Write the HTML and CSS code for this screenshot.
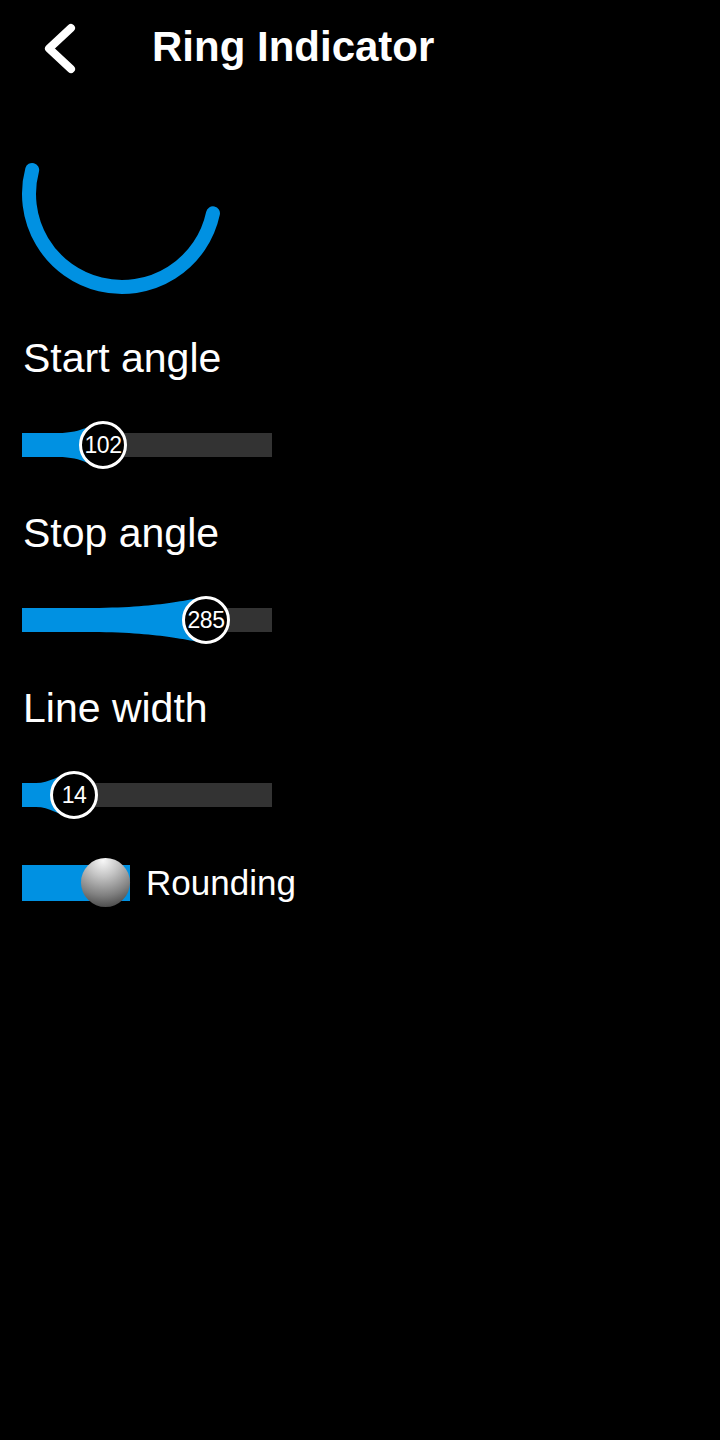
FILE: index.html
```html
<!DOCTYPE html>
<html>
<head>
<meta charset="utf-8">
<link rel="stylesheet" href="styles.css">
</head>
<body>
<div class="screen">
  <header class="header">
    <svg class="back" width="40" height="60" viewBox="0 0 40 60">
      <polyline points="27,9 5,29.5 27,50" fill="none" stroke="#fff" stroke-width="8" stroke-linecap="round" stroke-linejoin="round"/>
    </svg>
    <h1 class="title">Ring Indicator</h1>
  </header>

  <svg class="ring" width="200" height="200" viewBox="0 0 200 200">
    <path d="M 10.17 75.93 A 93 93 0 1 0 190.97 119.34" fill="none" stroke="#0091e2" stroke-width="14" stroke-linecap="round"/>
  </svg>

  <section class="control">
    <div class="label">Start angle</div>
    <div class="slider">
      <div class="track"></div>
      <svg class="fill" width="250" height="48" viewBox="0 0 250 48">
        <path d="M0,12 L36,12 C62,12 70,2 81,1 L81,47 C70,46 62,36 36,36 L0,36 Z" fill="#0091e2"/>
      </svg>
      <div class="knob" style="left:57px">102</div>
    </div>
  </section>

  <section class="control">
    <div class="label">Stop angle</div>
    <div class="slider">
      <div class="track"></div>
      <svg class="fill" width="250" height="48" viewBox="0 0 250 48">
        <path d="M0,12 L64,12 C140,12 166,3 184,1 L184,47 C166,45 140,36 64,36 L0,36 Z" fill="#0091e2"/>
      </svg>
      <div class="knob" style="left:160px">285</div>
    </div>
  </section>

  <section class="control">
    <div class="label">Line width</div>
    <div class="slider">
      <div class="track"></div>
      <svg class="fill" width="250" height="48" viewBox="0 0 250 48">
        <path d="M0,12 L14,12 C28,12 36,4 52,1 L52,47 C36,44 28,36 14,36 L0,36 Z" fill="#0091e2"/>
      </svg>
      <div class="knob" style="left:28px">14</div>
    </div>
  </section>

  <div class="switch-row">
    <div class="switch">
      <div class="switch-ball"></div>
    </div>
    <span class="switch-label">Rounding</span>
  </div>
</div>
</body>
</html>
```

FILE: styles.css
```css
html, body {
  margin: 0;
  padding: 0;
  background: #000;
}

body {
  font-family: "Liberation Sans", Arial, sans-serif;
  color: #fff;
}

.screen {
  width: 720px;
  height: 1440px;
  background: #000;
}

.header {
  height: 94px;
  display: flex;
  align-items: center;
}

.back {
  display: block;
  margin-left: 44px;
  margin-top: 4px;
}

.title {
  margin: 0 0 0 68px;
  font-size: 42px;
  font-weight: bold;
  line-height: 42px;
}

.ring {
  display: block;
  margin-left: 22px;
}

.control {
  padding-left: 22px;
}

.label {
  font-size: 41px;
  line-height: 48px;
  margin-top: 40px;
  margin-left: 1px;
}

.slider {
  position: relative;
  width: 250px;
  height: 48px;
  margin-top: 39px;
}

.track {
  position: absolute;
  left: 0;
  top: 12px;
  width: 250px;
  height: 24px;
  background: #333;
}

.fill {
  position: absolute;
  left: 0;
  top: 0;
  display: block;
}

.fill path {
  filter: blur(0.6px);
}

.knob {
  position: absolute;
  top: 0;
  width: 42px;
  height: 42px;
  border: 3px solid #fff;
  border-radius: 50%;
  background: #000;
  color: #fff;
  font-size: 23px;
  line-height: 42px;
  text-align: center;
  letter-spacing: -0.5px;
}

.switch-row {
  display: flex;
  align-items: center;
  margin-top: 39px;
  padding-left: 22px;
  height: 50px;
}

.switch {
  position: relative;
  width: 108px;
  height: 36px;
  background: #0091e2;
}

.switch-ball {
  position: absolute;
  right: 0;
  top: -7px;
  width: 49px;
  height: 49px;
  border-radius: 50%;
  background: radial-gradient(circle at 45% 5%, #f8f8f8 0%, #c4c4c4 30%, #808080 65%, #303030 100%);
}

.switch-label {
  margin-left: 16px;
  font-size: 35px;
  line-height: 40px;
}
```
